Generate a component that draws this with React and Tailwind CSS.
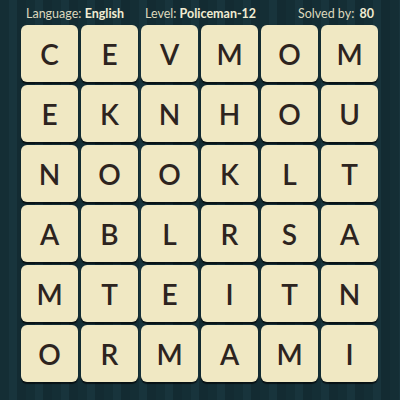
export default function App() {
  const rows = ["CEVMOM", "EKNHOU", "NOOKLT", "ABLRSA", "MTEITN", "ORMAMI"];
  return (
    <div
      className="w-[400px] h-[400px] overflow-hidden bg-[#163139] bg-[repeating-linear-gradient(90deg,#142e35_0px,#142e35_9px,#18343c_9px,#18343c_17px,#132b32_17px,#132b32_26px)]"
      style={{ fontFamily: "Lato, 'Liberation Sans', sans-serif" }}
    >
      <div className="flex items-end h-[20px] pl-[26px] text-[12.5px] leading-none text-[#dcd8bd]">
        <div className="w-[119px]">
          Language: <span className="font-bold text-[#f1ecd2]">English</span>
        </div>
        <div className="w-[153px]">
          Level: <span className="font-bold text-[#f1ecd2]">Policeman-12</span>
        </div>
        <div>
          Solved by: <span className="font-bold text-[#f1ecd2] ml-[2px]">80</span>
        </div>
      </div>
      <div className="ml-[21px] mt-[5px] grid grid-cols-6 gap-[3px] w-[357px]">
        {rows.join("").split("").map((ch, i) => (
          <div
            key={i}
            className="h-[57px] rounded-[6px] bg-[#f0e8c3] shadow-[0_2px_1px_rgba(0,0,0,0.6)] flex items-center justify-center text-[28px] font-semibold text-[#2d241f]"
          >
            {ch}
          </div>
        ))}
      </div>
    </div>
  );
}
